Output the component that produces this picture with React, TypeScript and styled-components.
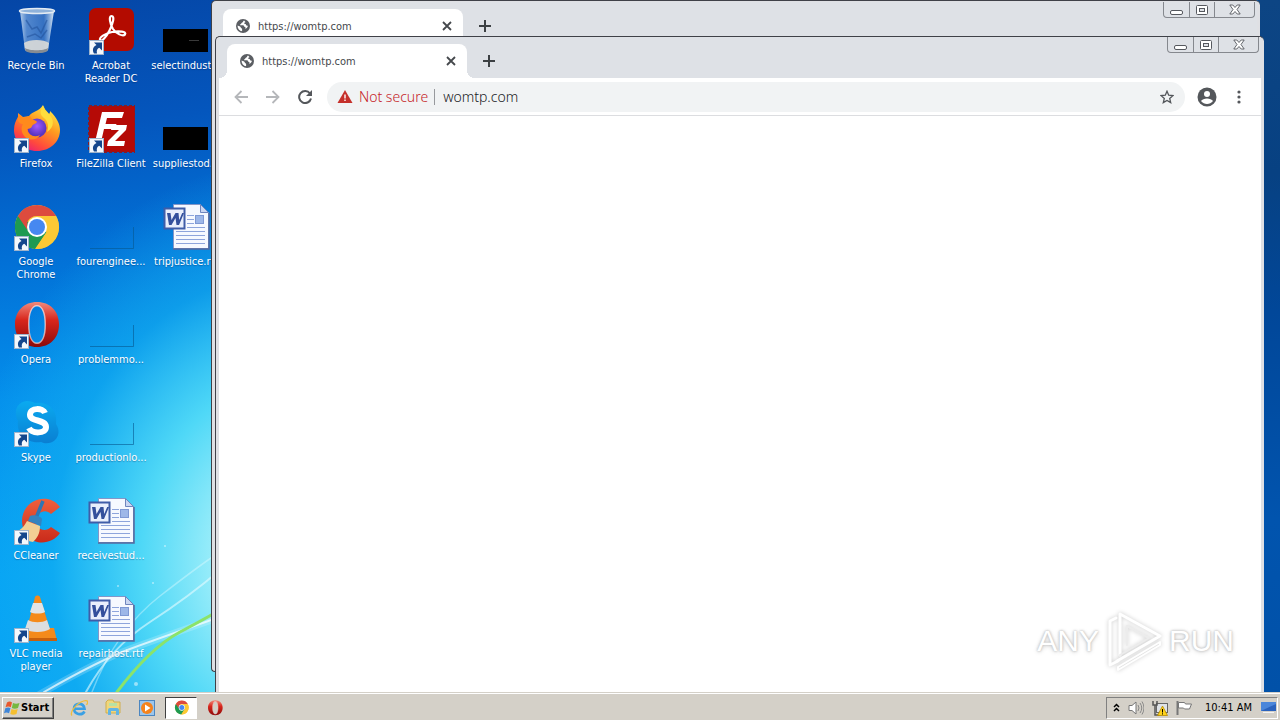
import React from 'react';
import styled, { createGlobalStyle, css } from 'styled-components';

const UI_FONT = "Tahoma, 'DejaVu Sans Condensed', 'Noto Sans', sans-serif";
const WEB_FONT = "'Noto Sans', 'Open Sans', sans-serif";

const GlobalStyle = createGlobalStyle`
  * { box-sizing: border-box; }
  body { margin: 0; }
  button, input { font: inherit; color: inherit; margin: 0; padding: 0; border: 0; background: none; }
`;

const Screen = styled.div`
  display: flex;
  flex-direction: column;
  height: 100vh;
  overflow: hidden;
  font: 11px/13px ${UI_FONT};
  color: #000;
`;

const Desktop = styled.main`
  position: relative;
  flex: 1;
  min-height: 0;
  overflow: hidden;
  background:
    radial-gradient(ellipse 330px 400px at 290px 560px, #c4f6fb 0, #9deefa 22%, #4fd8f7 45%, rgba(20, 176, 240, 0.6) 72%, rgba(4, 140, 230, 0) 100%),
    linear-gradient(172deg, #0546a6 0, #0456bd 16%, #0270d6 30%, #048fec 46%, #05a2f5 66%, #0aa2f5 100%);
`;

const EdgeStrip = styled.div`
  position: absolute;
  top: 0;
  right: 0;
  bottom: 0;
  width: 22px;
  background: linear-gradient(to bottom, #0d4584 0, #074182 25%, #014799 45%, #0154ae 75%, #0151a8 100%);
`;

const Rays = styled.svg`
  position: absolute;
  left: 0;
  bottom: 0;
  width: 220px;
  height: 212px;
`;

const IconGrid = styled.ul`
  position: relative;
  display: grid;
  grid-auto-flow: column;
  grid-template-rows: repeat(7, 98px);
  grid-auto-columns: 72px;
  column-gap: 3px;
  justify-content: start;
  margin: 0;
  padding: 0;
  list-style: none;
`;

const Shortcut = styled.button`
  display: flex;
  flex-direction: column;
  align-items: center;
  gap: 4px;
  width: 72px;
  padding-top: 7px;
  text-align: center;
  color: #fff;
  svg { display: block; flex: none; }
`;

const ShortcutLabel = styled.span<{ $wrap?: boolean }>`
  white-space: ${p => (p.$wrap ? 'normal' : 'nowrap')};
  text-shadow: 0 1px 1px rgba(0, 30, 80, 0.35);
`;

const WindowFrame = styled.section<{ $front?: boolean }>`
  position: absolute;
  display: flex;
  flex-direction: column;
  padding: 0 3px;
  border: 1px solid #3f4148;
  border-right: 0;
  border-radius: 5px 5px 4px 4px;
  background: #dfe0e4;
  overflow: hidden;
  ${p => p.$front
    ? css`top: 36px; left: 215px; right: 16px; bottom: -8px;`
    : css`top: 0; left: 211px; right: 20px; bottom: 20px; padding-top: 1px;`}
`;

const TabStrip = styled.header`
  display: flex;
  align-items: flex-start;
  height: 41px;
  padding: 7px 2px 0 8px;
  background: #dee1e6;
  flex: none;
`;

const Tab = styled.div`
  position: relative;
  display: flex;
  align-items: center;
  gap: 8px;
  width: 240px;
  height: 34px;
  padding: 0 8px 0 13px;
  border-radius: 8px 8px 0 0;
  background: #fff;
  &::before, &::after {
    content: '';
    position: absolute;
    bottom: 0;
    width: 8px;
    height: 8px;
  }
  &::before { left: -8px; background: radial-gradient(circle at 0 0, transparent 8px, #fff 8px); }
  &::after { right: -8px; background: radial-gradient(circle at 100% 0, transparent 8px, #fff 8px); }
  svg { display: block; }
`;

const TabTitle = styled.span`
  flex: 1;
  color: #45484c;
`;

const TabButton = styled.button<{ $size: number }>`
  display: flex;
  align-items: center;
  justify-content: center;
  width: ${p => p.$size}px;
  height: ${p => p.$size}px;
`;

const NewTab = styled(TabButton)`
  margin: 3px 0 0 8px;
`;

const Controls = styled.div`
  display: flex;
  height: 16px;
  margin: -7px 0 0 auto;
  border: 1px solid #85888e;
  border-top: 0;
  border-radius: 0 0 4px 4px;
`;

const Control = styled.button<{ $wide?: boolean }>`
  display: flex;
  align-items: center;
  justify-content: center;
  width: ${p => (p.$wide ? 40 : 25)}px;
  & + & { border-left: 1px solid #85888e; }
`;

const Toolbar = styled.nav`
  display: flex;
  align-items: center;
  gap: 4px;
  height: 38px;
  padding: 0 8px;
  border-bottom: 1px solid #dcdde0;
  background: #fff;
  flex: none;
`;

const ToolButton = styled.button`
  display: flex;
  align-items: center;
  justify-content: center;
  width: 28px;
  height: 28px;
  flex: none;
`;

const Omnibox = styled.div`
  display: flex;
  align-items: center;
  flex: 1;
  height: 30px;
  margin: 0 4px;
  padding: 0 4px 0 10px;
  border-radius: 15px;
  background: #f1f3f4;
  font-family: ${WEB_FONT};
  font-size: 14px;
  font-weight: 300;
  line-height: 18px;
`;

const Security = styled.button`
  display: flex;
  align-items: center;
  gap: 6px;
  padding-right: 6px;
  color: #c5221f;
`;

const Address = styled.input`
  flex: 1;
  min-width: 0;
  height: 16px;
  padding-left: 8px;
  border-left: 1px solid #97999d;
  outline: 0;
  color: #202124;
`;

const Viewport = styled.div`
  flex: 1;
  background: #fff;
`;

const Watermark = styled.div`
  position: absolute;
  right: 46px;
  bottom: 18px;
  display: flex;
  align-items: center;
  gap: 6px;
  color: #fff;
  font: 30px/66px 'Liberation Sans', sans-serif;
  text-shadow: 0 0 2px #c4c4c4, 0 0 3px #c8c8c8, 0 1px 5px #d4d4d4;
  svg { filter: drop-shadow(0 0 2px #c8c8c8); }
`;

const Taskbar = styled.footer`
  display: flex;
  align-items: center;
  height: 28px;
  flex: none;
  padding: 2px 2px 0;
  border-top: 1px solid #d4d0c8;
  box-shadow: inset 0 1px #fff;
  background: #d4d0c8;
`;

const StartButton = styled.button`
  display: flex;
  align-items: center;
  gap: 1px;
  width: 52px;
  height: 22px;
  padding-left: 1px;
  border: 1px solid;
  border-color: #fff #404040 #404040 #fff;
  box-shadow: inset -1px -1px #808080;
  font-weight: 700;
  margin-right: 9px;
`;

const TaskButton = styled.button<{ $active?: boolean }>`
  display: flex;
  align-items: center;
  justify-content: center;
  width: 32px;
  height: 22px;
  margin-right: 2px;
  ${p => p.$active && css`
    border: 1px solid;
    border-color: #404040 #fff #fff #404040;
    background: #fff;
  `}
`;

const Tray = styled.div`
  display: flex;
  align-items: center;
  height: 22px;
  margin-left: auto;
  padding-left: 4px;
  border: 1px solid;
  border-color: #808080 #fff #fff #808080;
`;

const TrayButton = styled.button<{ $width: number }>`
  display: flex;
  align-items: center;
  justify-content: center;
  width: ${p => p.$width}px;
  height: 20px;
`;

const Clock = styled.time`
  width: 54px;
  margin-left: 6px;
  white-space: nowrap;
`;

const ArrowBadge = () => (
  <g>
    <rect x="2.5" y="33.500" width="14" height="14" fill="#f4f8fc" stroke="#9fb4cc" />
    <path d="M7 35.500h8v8l-2.700-2.700c-2 .7-3 2.500-2.300 5.700H7c-2-3.500-1-6.700 2.500-8.500z" fill="#14468c" />
  </g>
);

const Glyph = ({ children, size = 48 }: { children: React.ReactNode; size?: number }) => (
  <svg width={size} height={size} viewBox="0 0 48 48" aria-hidden="true">{children}</svg>
);

const RecycleIcon = () => (
  <Glyph>
    <defs>
      <linearGradient id="bin" x1="0" x2="1">
        <stop offset="0" stopColor="#c9dcf0" stopOpacity=".9" />
        <stop offset=".2" stopColor="#6c9cda" stopOpacity=".75" />
        <stop offset=".7" stopColor="#4a82cc" stopOpacity=".7" />
        <stop offset=".9" stopColor="#a9c6e8" stopOpacity=".9" />
        <stop offset="1" stopColor="#e0ebf5" />
      </linearGradient>
    </defs>
    <path d="M8 4l5 39c3 3.500 20 3.500 23 0l6-39z" fill="url(#bin)" />
    <path d="M12 36c5-4 20-4 25 0l-1 7c-4 3.500-19 3.500-23 0z" fill="#dcdcd8" opacity=".9" />
    <path d="M13 41c4 3 19 3 23 0l-.5 3c-4 3-18 3-22 0z" fill="#868c92" />
    <path d="M14 13l6 9 5-2 4 6 6-13M15 30l8-3 6 4 6-8" fill="none" stroke="#23539c" strokeWidth="1.500" opacity=".6" />
    <ellipse cx="25" cy="4" rx="17.500" ry="2.500" fill="#8fb2da" stroke="#e3ebf3" strokeWidth="1.500" />
  </Glyph>
);

const AcrobatIcon = () => (
  <Glyph>
    <rect x="2" y="1" width="45" height="43" rx="7" fill="#b30b00" />
    <path d="M24.500 9c-3 0-1.500 8 1.500 13 3 4.500 10 8 12 5.500 2-3-6-4-13-2.500-6 1.300-13 5-12 8 1.200 2.500 6-2.500 9.500-9.500S28 9 24.500 9z" fill="none" stroke="#fff" strokeWidth="2.200" />
    <ArrowBadge />
  </Glyph>
);

const FirefoxIcon = () => (
  <Glyph>
    <defs>
      <linearGradient id="fox" x1=".8" y1="0" x2=".2" y2="1">
        <stop offset="0" stopColor="#fff24a" />
        <stop offset=".4" stopColor="#ff9a1f" />
        <stop offset=".75" stopColor="#ff4a3c" />
        <stop offset="1" stopColor="#e8177e" />
      </linearGradient>
      <radialGradient id="foxGlobe" cx=".5" cy=".4">
        <stop offset="0" stopColor="#a259ff" />
        <stop offset="1" stopColor="#5a35c0" />
      </radialGradient>
    </defs>
    <path d="M31 0c1 4 4 6 6 9 1-1 1-2 1-3 7 7 10 13 10 19 0 12-10 21-23 21S2 37 2 25c0-6 2-10 4-13V8l5 4 6-1C20 6 27 7 31 0z" fill="url(#fox)" />
    <circle cx="25" cy="23" r="9.500" fill="url(#foxGlobe)" />
    <path d="M6 11l5 2 7-2c1 4 6 4 7 6-1 2-4 2-5 4 0 2-3 3-5 3 1 6 7 9 13 6-4 7-15 6-18-3-1-4 0-6 1-8-3 0-6-2-5-8z" fill="#ff8a1c" />
    <path d="M32 1c-5 5-4 9 0 12s5 9 3 14c8-5 7-13 2-18-3-3-5-4-5-8z" fill="#ffdd3d" />
    <ArrowBadge />
  </Glyph>
);

const FileZillaIcon = () => (
  <Glyph>
    <rect x="2" y="1" width="46" height="46" fill="#b50a06" stroke="#8a1a24" strokeWidth="2" strokeDasharray="3 2" />
    <path d="M15 7h22l-2 6H20l-1.500 6h11l-1.500 5H17l-3 13H8z" fill="#fff" />
    <path d="M25 20h15l-1 5-11 11h10l-1 5H20l1-5 11-11h-8z" fill="#fff" />
    <ArrowBadge />
  </Glyph>
);

const ChromeMark = () => (
  <g>
    <circle cx="25" cy="24" r="22" fill="#fcc934" />
    <path d="M5.900 13A22 22 0 0 0 23 46l11.500-17L25 24z" fill="#1e9a52" />
    <path d="M5.900 13A22 22 0 0 1 44.100 13H25a11 11 0 0 0-9.500 5.500l-.5 8z" fill="#dd4b3e" />
    <path d="M44.100 13A22 22 0 0 1 23.500 46l11-16.500a11 11 0 0 0-.5-11.500L25 13z" fill="#fcc934" />
    <circle cx="25" cy="24" r="10" fill="#fff" />
    <circle cx="25" cy="24" r="8" fill="#4688f1" />
  </g>
);

const ChromeIcon = () => <Glyph><ChromeMark /><ArrowBadge /></Glyph>;

const OperaMark = ({ id }: { id: string }) => (
  <g>
    <defs>
      <linearGradient id={id} x2="0" y2="1">
        <stop offset="0" stopColor="#f08a7c" />
        <stop offset=".4" stopColor="#d8261c" />
        <stop offset="1" stopColor="#8c0a0a" />
      </linearGradient>
    </defs>
    <path fillRule="evenodd" d="M25 1c13 0 22 9 22 22.500S38 46 25 46 3 37 3 23.500 12 1 25 1zm0 4c-5 0-8 7-8 18.500S20 42 25 42s8-7 8-18.500S30 5 25 5z" fill={`url(#${id})`} />
    <path fillRule="evenodd" d="M25 4c6 0 9 8 9 19.500S31 43 25 43s-9-8-9-19.500S19 4 25 4zm0 1.500c-5 0-7.500 7-7.500 18S20 41.500 25 41.500s7.500-7 7.500-18-2.500-18-7.500-18z" fill="#fff" opacity=".6" />
  </g>
);

const OperaIcon = () => <Glyph><OperaMark id="operaDesk" /><ArrowBadge /></Glyph>;

const SkypeIcon = () => (
  <Glyph>
    <defs>
      <linearGradient id="sky" x2="0" y2="1">
        <stop offset="0" stopColor="#0aaaf0" />
        <stop offset="1" stopColor="#0a7fd2" />
      </linearGradient>
    </defs>
    <path d="M15 2c4 0 6 1 8 2 14-2 23 8 21 21 4 6 3 12-1 16s-10 4-14 2C15 45 4 35 6 22 1 12 5 3 15 2z" fill="url(#sky)" />
    <path d="M33 14c-2-5-15-6-15 2 0 7 16 4 16 12 0 7-14 7-17 1" fill="none" stroke="#fff" strokeWidth="6" />
    <ArrowBadge />
  </Glyph>
);

const CCleanerIcon = () => (
  <Glyph>
    <defs>
      <linearGradient id="cc" x2="0" y2="1">
        <stop offset="0" stopColor="#f0603c" />
        <stop offset="1" stopColor="#c92a1a" />
      </linearGradient>
    </defs>
    <path d="M48 10l-9 7c-6-6-15-1-15 7s9 12 15 6l9 6C38 51 11 49 10 24 10 3 36-6 48 10z" fill="url(#cc)" />
    <path d="M31 4L24 21" stroke="#2e76b4" strokeWidth="3.500" />
    <path d="M18 19c3-2 11 0 12 3l-1 7-13-5z" fill="#3583bf" />
    <path d="M15 24l13 5c0 8-3 12-7 16-6-1-12-4-18-9 5-3 9-6 12-12z" fill="#f3cf94" />
    <ArrowBadge />
  </Glyph>
);

const VlcIcon = () => (
  <Glyph>
    <path d="M12 33h30l3 13H9z" fill="#f28a1c" />
    <path d="M10 43h35v3H9z" fill="#c75f0c" />
    <path d="M23 2c1-2 4-2 5 0l11 36c-5 4-20 4-25 0z" fill="#f58a1a" />
    <path d="M21 8h9l3 9c-4 2-11 2-15 0z" fill="#e2e4e6" />
    <path d="M16 25c5 3 14 3 19 0l3 9c-6 4-19 4-25 0z" fill="#dcdee0" />
    <ArrowBadge />
  </Glyph>
);

const WordIcon = () => (
  <Glyph>
    <path d="M11.500 1.500h27l8 8v36h-35z" fill="#f6f9ff" stroke="#8396c8" />
    <path d="M47 10v36H11" fill="none" stroke="#54699f" strokeWidth="1.500" />
    <path d="M38.500 1.500v8h8z" fill="#c9d6f2" stroke="#6f85bd" />
    <path d="M25 12.500h7M25 16.500h7M25 20.500h7M14 28.500h29M14 32.500h29M14 36.500h29M14 40.500h29M25 24.500h18" stroke="#8ea5dc" />
    <rect x="33.500" y="12.500" width="8" height="8" fill="#9db7e8" stroke="#7e98d4" />
    <rect x="2.500" y="5.500" width="20" height="20" fill="#e9effc" stroke="#3f5da8" strokeWidth="2" />
    <path d="M5 10h3.500l1 7 4-7h3l.7 7 3-7H22l-5 12h-2.500l-1-7-4 7H7z" fill="#34509c" />
  </Glyph>
);

const BlankIcon = () => (
  <Glyph>
    <path d="M3 45.500h43.500V24" fill="none" stroke="#06588f" strokeOpacity=".6" />
  </Glyph>
);

const DarkImageIcon = ({ mark }: { mark?: boolean }) => (
  <Glyph>
    <rect x="1" y="22" width="45" height="23" fill="#000" />
    {mark && <path d="M27 33.500h10" stroke="#3a3a3a" />}
  </Glyph>
);

const GlobeIcon = () => (
  <svg width="14" height="14" viewBox="0 0 14 14" aria-hidden="true">
    <circle cx="7" cy="7" r="7" fill="#5b5e63" />
    <path d="M8 1.500c-1 .5-1 2-2 2.200-1 .3-.5 1.300-1.500 1.500-.8.300-.5 1 .3 1h2.500c1 .3.500 1.800 1.700 1.800.8.300.5 1.500 0 2 1.200-.3 2.500-1.500 3-3.200-1 0-2-.2-2-1.300-.3-.8-1.800-.5-1.800-1.300 0-.8 1.300-.5 1.300-1.200zM1.600 6.500c1.500.6 2.900.8 3.200 2 .1.900 1.200.7 1.300 1.500v2.300C3.500 12 1.500 9.500 1.600 6.500z" fill="#fff" />
  </svg>
);

const ChromeWindow = ({ front }: { front?: boolean }) => (
  <WindowFrame $front={front} aria-label="https://womtp.com">
    <TabStrip>
      <Tab>
        <GlobeIcon />
        <TabTitle>https://womtp.com</TabTitle>
        <TabButton $size={16} aria-label="Close tab">
          <svg width="10" height="10" viewBox="0 0 10 10"><path d="M1 1l8 8M9 1L1 9" stroke="#45484c" strokeWidth="1.800" /></svg>
        </TabButton>
      </Tab>
      <NewTab $size={28} aria-label="New tab">
        <svg width="12" height="12" viewBox="0 0 12 12"><path d="M6 0v12M0 6h12" stroke="#3c4043" strokeWidth="2" /></svg>
      </NewTab>
      <Controls>
        <Control aria-label="Minimize">
          <svg width="13" height="12" viewBox="0 0 13 12"><rect x=".5" y="6.500" width="12" height="4" rx="1.500" fill="#fff" stroke="#55585e" /></svg>
        </Control>
        <Control aria-label="Restore">
          <svg width="12" height="10" viewBox="0 0 12 10"><rect x=".5" y=".5" width="11" height="9" rx="1" fill="#fff" stroke="#55585e" /><rect x="3.500" y="3.500" width="5" height="3" fill="#dee1e6" stroke="#55585e" /></svg>
        </Control>
        <Control $wide aria-label="Close">
          <svg width="12" height="11" viewBox="0 0 12 11"><path d="M.8 1h3L6 3.500 8.200 1h3L8 5.500l3.200 4.500h-3L6 7.500 3.800 10h-3L4 5.500z" fill="#fff" stroke="#55585e" strokeWidth=".9" /></svg>
        </Control>
      </Controls>
    </TabStrip>
    {front && (
      <Toolbar>
        <ToolButton aria-label="Back">
          <svg width="14" height="14" viewBox="0 0 14 14"><path d="M14 7H1.500M7.500 1l-6 6 6 6" fill="none" stroke="#b5b7ba" strokeWidth="1.800" /></svg>
        </ToolButton>
        <ToolButton aria-label="Forward">
          <svg width="14" height="14" viewBox="0 0 14 14"><path d="M0 7h12.500M6.500 1l6 6-6 6" fill="none" stroke="#b5b7ba" strokeWidth="1.800" /></svg>
        </ToolButton>
        <ToolButton aria-label="Reload">
          <svg width="14" height="14" viewBox="0 0 14 14"><path d="M12 3.500A6 6 0 1 0 13 8.500" fill="none" stroke="#54575b" strokeWidth="2" /><path d="M14 0v6H8z" fill="#54575b" /></svg>
        </ToolButton>
        <Omnibox>
          <Security>
            <svg width="16" height="13" viewBox="0 0 16 13"><path d="M8 0l7.500 13H.5z" fill="#c5302b" /><path d="M8 4.500v4M8 9.500v1.500" stroke="#fff" strokeWidth="1.400" /></svg>
            Not secure
          </Security>
          <Address type="text" aria-label="Address" defaultValue="womtp.com" />
          <ToolButton aria-label="Bookmark this page">
            <svg width="14" height="14" viewBox="0 0 14 14"><path d="M7 1.200l1.700 4 4.300.4-3.300 2.800 1 4.200L7 10.400l-3.700 2.200 1-4.200L1 5.600l4.300-.4z" fill="none" stroke="#54575b" strokeWidth="1.300" /></svg>
          </ToolButton>
        </Omnibox>
        <ToolButton aria-label="Profile">
          <svg width="20" height="20" viewBox="0 0 20 20"><circle cx="10" cy="10" r="9.500" fill="#54575b" /><circle cx="10" cy="7" r="3" fill="#fff" /><path d="M4 14c2-3.500 10-3.500 12 0-3 4-9 4-12 0z" fill="#fff" /></svg>
        </ToolButton>
        <ToolButton aria-label="Menu">
          <svg width="4" height="14" viewBox="0 0 4 14"><g fill="#54575b"><circle cx="2" cy="2" r="1.600" /><circle cx="2" cy="7" r="1.600" /><circle cx="2" cy="12" r="1.600" /></g></svg>
        </ToolButton>
      </Toolbar>
    )}
    <Viewport />
  </WindowFrame>
);

const SHORTCUTS: { label: string; icon: React.ReactNode; wrap?: boolean }[] = [
  { label: 'Recycle Bin', icon: <RecycleIcon /> },
  { label: 'Firefox', icon: <FirefoxIcon /> },
  { label: 'Google Chrome', icon: <ChromeIcon />, wrap: true },
  { label: 'Opera', icon: <OperaIcon /> },
  { label: 'Skype', icon: <SkypeIcon /> },
  { label: 'CCleaner', icon: <CCleanerIcon /> },
  { label: 'VLC media player', icon: <VlcIcon />, wrap: true },
  { label: 'Acrobat Reader DC', icon: <AcrobatIcon />, wrap: true },
  { label: 'FileZilla Client', icon: <FileZillaIcon /> },
  { label: 'fourenginee...', icon: <BlankIcon /> },
  { label: 'problemmo...', icon: <BlankIcon /> },
  { label: 'productionlo...', icon: <BlankIcon /> },
  { label: 'receivestud...', icon: <WordIcon /> },
  { label: 'repairhost.rtf', icon: <WordIcon /> },
  { label: 'selectindust...', icon: <DarkImageIcon mark /> },
  { label: 'suppliestod...', icon: <DarkImageIcon /> },
  { label: 'tripjustice.rtf', icon: <WordIcon /> },
];

export default function App() {
  return (
    <Screen>
      <GlobalStyle />
      <Desktop>
        <EdgeStrip />
        <Rays viewBox="0 0 220 212" aria-hidden="true">
          <g fill="none" strokeLinecap="round">
            <path d="M40 214Q100 180 130 169T220 137" stroke="#fff" strokeOpacity=".2" strokeWidth="7" />
            <path d="M44 212Q100 180 130 169T220 137" stroke="#fff" strokeOpacity=".7" strokeWidth="2" />
            <path d="M86 212Q110 168 150 142T220 90" stroke="#e6fcff" strokeOpacity=".6" strokeWidth="2" />
            <path d="M92 212Q116 150 160 116T220 72" stroke="#e6fcff" strokeOpacity=".4" strokeWidth="1.500" />
            <path d="M117 212Q150 168 180 152T220 130" stroke="#8be36a" strokeWidth="3" />
          </g>
          <g fill="#fff" fillOpacity=".5">
            <circle cx="118" cy="106" r="1" /><circle cx="153" cy="103" r="1" /><circle cx="136" cy="204" r="2" /><circle cx="165" cy="66" r="1" />
          </g>
        </Rays>
        <IconGrid>
          {SHORTCUTS.map(s => (
            <li key={s.label}>
              <Shortcut>
                {s.icon}
                <ShortcutLabel $wrap={s.wrap}>{s.label}</ShortcutLabel>
              </Shortcut>
            </li>
          ))}
        </IconGrid>
        <ChromeWindow />
        <ChromeWindow front />
        <Watermark>
          <span>ANY</span>
          <svg width="58" height="64" viewBox="0 0 58 64" aria-hidden="true">
            <g fill="none" stroke="#fff" strokeWidth="3" strokeLinejoin="round" strokeLinecap="round">
              <path d="M15 46V5l40 22L12 52" />
              <path d="M11 9l-6 3v44l8-4" />
              <path d="M22 36V17l22 12-29 17" stroke="#ececec" strokeWidth="2" />
              <path d="M55 33L13 58v3l42-25z" strokeWidth="2" />
            </g>
          </svg>
          <span>RUN</span>
        </Watermark>
      </Desktop>
      <Taskbar>
        <StartButton>
          <svg width="16" height="16" viewBox="0 0 16 16" aria-hidden="true">
            <path d="M3 2.500c2-1.500 4-1 5 0L6.800 7.300c-1.500-1-3.500-1-5.300 0z" fill="#e8582c" />
            <path d="M9 3c2 1 4 1 6.500 0L14 8c-2 1-4.500 1-6.200 0z" fill="#76b83f" />
            <path d="M1.300 8.300c2-1 3.800-1 5.200 0L5 13.300c-1.500-1-3.300-1-5 0z" fill="#3f86d8" />
            <path d="M7.500 9c2 1 4 1 6.200 0l-1.200 5c-2 1-4.500 1-6.200 0z" fill="#f5bf2f" />
          </svg>
          Start
        </StartButton>
        <TaskButton aria-label="Internet Explorer">
          <svg width="18" height="18" viewBox="0 0 18 18">
            <path d="M14.500 12.500C12 17 4 15.500 4 9.500S13.500 3 14.500 9.700H5" fill="none" stroke="#3ba0e4" strokeWidth="2.600" />
            <path d="M2 16.500C-.5 14 5 6 11 3s8-1 5.500 3" fill="none" stroke="#f0bd3c" strokeWidth="1.300" />
          </svg>
        </TaskButton>
        <TaskButton aria-label="File Explorer">
          <svg width="17" height="17" viewBox="0 0 17 17">
            <path d="M1 3l2-2h5l1 2h6v11H1z" fill="#f0d67c" stroke="#cfae4f" />
            <path d="M4 4h8v3H4z" fill="#b7e2a4" />
            <path d="M3 16v-5q0-2 2-2h7q2 0 2 2v5h-3v-4H6v4z" fill="#62b4e4" />
          </svg>
        </TaskButton>
        <TaskButton aria-label="Media Player">
          <svg width="16" height="16" viewBox="0 0 16 16">
            <rect x=".5" y=".5" width="15" height="15" fill="#9cc6ec" stroke="#4c86c0" />
            <circle cx="8" cy="8" r="6" fill="#f5831c" />
            <path d="M6 4.500l5.500 3.500L6 11.500z" fill="#fff" />
          </svg>
        </TaskButton>
        <TaskButton $active aria-label="Google Chrome"><Glyph size={15}><ChromeMark /></Glyph></TaskButton>
        <TaskButton aria-label="Opera"><Glyph size={16}><OperaMark id="operaTask" /></Glyph></TaskButton>
        <Tray>
          <TrayButton $width={10} aria-label="Show hidden icons">
            <svg width="7" height="9" viewBox="0 0 7 9"><path d="M1 4l2.500-2.500L6 4M1 8l2.500-2.500L6 8" fill="none" stroke="#000" strokeWidth="1.500" /></svg>
          </TrayButton>
          <TrayButton $width={30} aria-label="Volume">
            <svg width="16" height="16" viewBox="0 0 16 16"><path d="M1 5.500h3L8 2v12L4 10.500H1z" fill="#fff" stroke="#777" /><path d="M10 5q2 3 0 6M12 3q3.500 5 0 10M14 1.500q4 6.500 0 13" fill="none" stroke="#888" /></svg>
          </TrayButton>
          <TrayButton $width={18} aria-label="Network">
            <svg width="16" height="16" viewBox="0 0 16 16"><rect x="4.500" y="3.500" width="11" height="9" fill="#dfe3e8" stroke="#666" /><path d="M1 1v4h4V1M3 5v10h4" fill="none" stroke="#555" strokeWidth="1.500" /><path d="M10.500 6l5 9.500h-10z" fill="#ffd31a" stroke="#b58a00" strokeWidth=".8" /><path d="M10.500 9v3.500M10.500 13.300v1.200" stroke="#000" /></svg>
          </TrayButton>
          <TrayButton $width={30} aria-label="Action Center">
            <svg width="16" height="16" viewBox="0 0 16 16"><path d="M1.500 1v14" stroke="#777" strokeWidth="2" /><path d="M2.500 2.500h6l1 1.500h6l-2 5H8.500l-1-1h-5z" fill="#fff" stroke="#777" /></svg>
          </TrayButton>
          <Clock>10:41 AM</Clock>
          <TrayButton $width={18} aria-label="Show desktop">
            <svg width="15" height="12" viewBox="0 0 15 12"><rect width="15" height="9" fill="#2a62bd" /><path d="M0 9L15 2V0H0z" fill="#4b86da" /><path d="M2 10h11v1H2z" fill="#f4f4f4" /></svg>
          </TrayButton>
        </Tray>
      </Taskbar>
    </Screen>
  );
}
